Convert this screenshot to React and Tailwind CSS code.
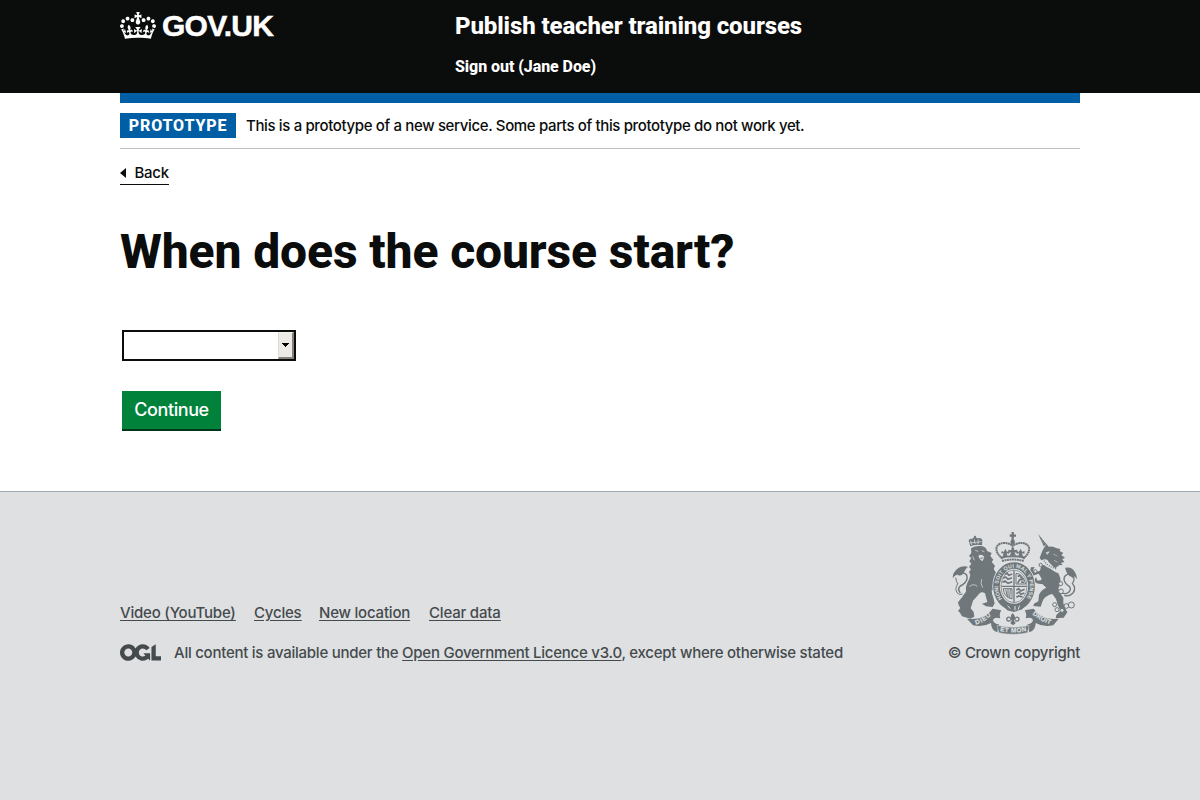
import React from "react";

function Crown() {
  return (
    <svg viewBox="0 0 132 97" className="mt-[12px] h-[27px] w-9 shrink-0" preserveAspectRatio="none" fill="currentColor" aria-hidden="true">
      <path fillRule="evenodd" d="M25 30.2c3.5 1.5 7.7-.2 9.1-3.7 1.5-3.6-.2-7.8-3.9-9.2-3.6-1.4-7.6.3-9.1 3.9-1.4 3.5.3 7.5 3.9 9zM9 39.5c3.6 1.5 7.8-.2 9.2-3.7 1.5-3.6-.2-7.8-3.9-9.1-3.6-1.5-7.6.2-9.1 3.8-1.4 3.5.3 7.5 3.8 9zM4.4 57.2c3.5 1.5 7.7-.2 9.1-3.8 1.5-3.6-.2-7.7-3.9-9.1-3.5-1.5-7.6.3-9.1 3.8-1.4 3.5.3 7.6 3.9 9.1zm38.3-21.4c3.5 1.5 7.7-.2 9.1-3.8 1.5-3.6-.2-7.7-3.9-9.1-3.6-1.5-7.6.3-9.1 3.8-1.3 3.6.4 7.7 3.9 9.1zm64.4-5.6c-3.6 1.5-7.8-.2-9.1-3.7-1.5-3.6.2-7.8 3.8-9.2 3.6-1.4 7.7.3 9.2 3.9 1.3 3.5-.4 7.5-3.9 9zm15.9 9.3c-3.6 1.5-7.7-.2-9.1-3.7-1.5-3.6.2-7.8 3.7-9.1 3.6-1.5 7.7.2 9.2 3.8 1.5 3.5-.3 7.5-3.8 9zm4.7 17.7c-3.6 1.5-7.8-.2-9.2-3.8-1.5-3.6.2-7.7 3.9-9.1 3.6-1.5 7.7.3 9.2 3.8 1.3 3.5-.4 7.6-3.9 9.1zM89.3 35.8c-3.6 1.5-7.8-.2-9.2-3.8-1.4-3.6.2-7.7 3.9-9.1 3.6-1.5 7.7.3 9.2 3.8 1.4 3.6-.3 7.7-3.9 9.1zM69.7 17.7l8.9 4.7V9.3l-8.9 2.8c-.2-.3-.5-.6-.9-.9L72.4 0H59.6l3.5 11.2c-.3.3-.6.5-.9.9l-8.8-2.8v13.1l8.8-4.7c.3.3.6.7.9.9l-5 15.4v.1c-.2.8-.4 1.6-.4 2.4 0 4.1 3.1 7.5 7 8.1h.2c.3 0 .7.1 1 .1.4 0 .7 0 1-.1h.2c4-.6 7.1-4.1 7.1-8.1 0-.8-.1-1.7-.4-2.4V34l-5.1-15.4c.4-.2.7-.6 1-.9zM66 92.8c16.9 0 32.8 1.1 47.1 3.2 4-16.9 8.9-26.7 14-33.5l-9.6-3.4c1 4.9 1.1 7.2 0 10.2-1.5-1.4-3-4.3-4.2-8.7L108.6 76c2.8-2 5-3.2 7.5-3.3-4.4 9.4-10 11.9-13.6 11.2-4.3-.8-6.3-4.6-5.6-7.9 1-4.7 5.7-5.9 8-.5 4.3-8.7-3-11.4-7.6-8.8 7.1-7.2 7.9-13.5 2.1-21.1-8 6.1-8.1 12.3-4.5 20.8-4.7-5.4-12.1-2.5-9.5 6.2 3.4-5.2 7.9-2 7.2 3.1-.6 4.3-6.4 7.8-13.5 7.2-10.3-.9-10.9-8-11.2-13.8 2.5-.5 7.1 1.8 11 7.3L80.2 60c-4.1 4.4-8 5.3-12.3 5.4 1.4-4.4 8-11.6 8-11.6H55.5s6.4 7.2 7.9 11.6c-4.2-.1-8-1-12.3-5.4l1.4 16.4c3.9-5.5 8.5-7.7 10.9-7.3-.3 5.8-.9 12.8-11.1 13.8-7.2.6-12.9-2.9-13.5-7.2-.7-5 3.8-8.3 7.1-3.1 2.7-8.7-4.6-11.6-9.4-6.2 3.7-8.5 3.6-14.7-4.6-20.8-5.8 7.6-5 13.9 2.2 21.1-4.7-2.6-11.9.1-7.7 8.8 2.3-5.5 7.1-4.2 8.1.5.7 3.3-1.3 7.1-5.7 7.9-3.5.7-9-1.8-13.5-11.2 2.5.1 4.7 1.3 7.5 3.3l-4.7-15.4c-1.2 4.4-2.7 7.2-4.3 8.7-1.1-3-.9-5.3 0-10.2l-9.5 3.4c5 6.9 9.9 16.7 14 33.5 14.8-2.1 30.8-3.2 47.7-3.2z" />
    </svg>
  );
}

function OglLogo() {
  return (
    <svg viewBox="0 0 483.2 195.7" className="h-[17px] w-[41px] shrink-0 -translate-y-px" fill="currentColor" aria-hidden="true">
      <path d="M421.5 142.8V.1l-50.7 32.3v161.1h112.4v-50.7zm-122.3-9.6A47.12 47.12 0 0 1 221 97.8c0-26 21.1-47.1 47.1-47.1 16.7 0 31.4 8.7 39.7 21.8l42.7-27.2A97.63 97.63 0 0 0 268.1 0c-36.5 0-68.3 20.1-85.1 49.7A98 98 0 0 0 97.8 0C43.9 0 0 43.9 0 97.8s43.9 97.8 97.8 97.8c36.5 0 68.3-20.1 85.1-49.7a97.76 97.76 0 0 0 149.6 25.4l19.4 22.2h3v-87.8h-80l24.3 27.5zM97.8 145c-26 0-47.1-21.1-47.1-47.1s21.1-47.1 47.1-47.1 47.1 21.1 47.1 47.1S123.8 145 97.8 145" />
    </svg>
  );
}

function CoatOfArms() {
  const ink = "#6f777b";
  const paper = "#dee0e2";
  return (
    <svg viewBox="30 15 390 315" className="h-[105px] w-[130px]" preserveAspectRatio="none" aria-hidden="true">
      {/* lion */}
      <g fill={ink}>
        <path d="M91 64 L86 48 Q87 39 96 42 Q103 33 112 40 Q123 36 127 45 L126 61 Q108 56 91 64Z" />
        <circle cx="105" cy="36" r="3.5" />
        <path d="M93 70 Q108 60 128 64 Q139 67 141 78 L155 84 L151 93 L160 104 L155 111 L165 122 L161 132 L169 145 L162 158 L170 172 L158 181 L164 197 L155 195 Q155 207 160 218 L164 235 L158 246 L138 244 L126 236 L142 231 L135 205 Q126 199 119 205 L99 227 L92 250 L101 261 L103 275 L91 281 L66 274 L59 262 L54 258 L61 249 L56 240 L54 232 L65 218 Q72 207 78 200 Q76 184 82 174 Q89 162 91 150 L87 141 L93 133 L87 126 L94 116 L88 109 L94 99 L87 93 L94 84 Z" />
        <path d="M38 160 Q37 142 55 129 Q65 122 84 125 Q75 132 72 142 Q64 157 53 149 Q46 148 38 160Z" />
      </g>
      <path d="M66 143 Q84 145 81 162 Q77 175 61 183 Q51 192 61 204" fill="none" stroke={ink} strokeWidth="4.5" />
      <path d="M47 158 Q49 172 54 177 M53 177 Q43 191 52 204 Q58 212 68 207" fill="none" stroke={ink} strokeWidth="3" />
      <g stroke={paper} fill="none" strokeWidth="2.2">
        <path d="M92 47 L95 60 M103 43 L105 57 M115 43 L114 57 M88 54 L125 50" />
        <path d="M106 76 L115 79 M125 77 L133 80 M98 94 L103 106 M88 185 Q100 174 112 184 M128 188 Q120 175 125 163" />
      </g>
      <path d="M115 92 Q125 85 133 96 L128 108 Q119 105 115 92Z" fill={paper} />
      <path d="M119 99 L131 97 L126 102Z" fill={ink} />

      {/* unicorn */}
      <path d="M294 26 L319 57 L311 64 Z" fill={ink} />
      <path d="M301 49 L308 45 M306 56 L313 51" stroke={paper} strokeWidth="1" />
      <g fill={ink}>
        <path d="M313 67 L319 56 L326 65 Q338 62 350 70 L361 72 L359 78 L370 84 L364 90 L375 98 L367 103 L373 111 L363 114 L368 121 L357 120 L349 134 L326 111 Q323 101 313 103 L304 106 L299 98 L307 78Z" />
        <path d="M304 121 L323 119 Q331 135 355 145 L360 157 Q365 175 355 190 L361 205 L370 219 L370 235 L374 247 L382 262 L371 278 L347 280 L349 270 L362 257 L354 242 L348 222 L337 207 Q318 211 309 225 L302 245 L280 243 L282 236 L295 229 L297 209 Q304 194 319 188 L307 177 Q286 178 280 166 L289 157 L291 166 Q304 169 305 161 L296 146 L278 152 L270 138 L273 127 L284 126 L279 136 L284 142 L300 137Z" />
        <path d="M375 128 Q397 124 405 142 Q411 150 411 163 L404 154 Q400 164 394 155 Q382 154 375 128Z" />
      </g>
      <path d="M392 146 Q371 148 372 164 Q375 177 388 184 Q395 192 386 202 Q377 209 365 204 M402 157 Q403 168 397 175 Q410 190 399 204 Q388 216 373 211" fill="none" stroke={ink} strokeWidth="4" />
      <path d="M309 109 Q317 127 349 133 L355 126" fill="none" stroke={paper} strokeWidth="7" />
      <path d="M312 107 Q322 125 352 132" fill="none" stroke={ink} strokeWidth="4" strokeDasharray="3 4" />
      <g fill={paper} stroke={ink} strokeWidth="3">
        <circle cx="302" cy="120" r="5" /><circle cx="286" cy="139" r="5" />
        <circle cx="362" cy="176" r="6" /><circle cx="363" cy="199" r="7" />
        <circle cx="344" cy="239" r="6" /><circle cx="351" cy="254" r="6" />
        <circle cx="366" cy="256" r="6" /><circle cx="379" cy="243" r="7" />
        <circle cx="394" cy="240" r="9" />
      </g>
      <path d="M318 83 L328 80 L322 88Z M340 87 L352 93 M342 106 L353 112" fill={paper} stroke={paper} strokeWidth="1.5" />

      {/* imperial crown */}
      <g fill="none" stroke={ink}>
        <path d="M218 21 V49 M209 32 H228" strokeWidth="7" />
        <path d="M188 101 C163 82 162 57 190 54 Q208 54 216 61 M249 101 C274 82 274 57 247 54 Q230 54 220 61 M218 45 V83" strokeWidth="6" strokeDasharray="6 1.2" />
        <path d="M182 98 Q218 89 255 98" strokeWidth="6" />
        <path d="M186 108 Q218 99 251 108" strokeWidth="6" strokeDasharray="6 1.5" />
      </g>
      <g fill={ink}>
        <circle cx="218" cy="51" r="7" />
        <path d="M188 95 L191 84 L184 86 L185 79 L192 80 L196 71 L201 80 L208 79 L207 87 L200 84 L202 93Z M209 92 L214 82 L205 84 V74 L213 76 L218 66 L224 76 L232 74 V84 L223 82 L228 92Z M236 93 L237 84 L230 87 L230 79 L237 80 L242 71 L246 80 L254 79 L253 87 L246 84 L249 95Z" />
      </g>

      {/* garter and quartered shield */}
      <ellipse cx="222" cy="184" rx="65" ry="75" fill={paper} />
      <ellipse cx="222" cy="184" rx="52.5" ry="62.5" fill="none" stroke={ink} strokeWidth="20" />
      <ellipse cx="222" cy="184" rx="39" ry="49" fill={paper} stroke={ink} strokeWidth="2" />
      <path d="M184 184 H260 M222 136 V232" stroke={ink} strokeWidth="4" />
      <g fill="none" stroke={ink} strokeWidth="5">
        <path d="M195 149 L201 144 L206 151 L217 147 M189 160 L197 156 L204 163 L216 158 M187 172 L195 168 L204 175 L217 170" />
        <path d="M228 145 Q249 146 257 177 H228 Z" strokeWidth="3" />
        <path d="M233 155 L239 151 L248 164 L239 164 L233 175 M243 171 L252 172" />
        <path d="M190 191 H216 V222 Q191 216 190 191 M197 193 L202 215 M204 192 V218 M211 192 L209 219" strokeWidth="3" />
        <path d="M229 195 L236 191 L242 198 L254 193 M229 206 L237 201 L243 208 L253 204 M229 217 L236 213 L248 216" />
      </g>
      <defs>
        <path id="garter" d="M186 222 A47.5 57 0 1 1 258 222" />
        <path id="ribbonLeft" d="M108 299 Q137 290 158 266" />
        <path id="ribbonBase" d="M180 318 Q219 327 259 318" />
        <path id="ribbonRight" d="M277 268 Q302 290 336 299" />
      </defs>
      <text fill={paper} fontFamily="Liberation Sans" fontSize="16" fontWeight="700">
        <textPath href="#garter" textLength="240">HONI SOIT QUI MAL Y PENSE</textPath>
      </text>
      <path d="M190 236 L221 249 L256 236 L247 253 L222 261 L201 256Z" fill={ink} />
      <path d="M203 242 L211 251 M225 243 V256 M239 242 L234 254" stroke={paper} strokeWidth="3" />

      {/* motto ribbon */}
      <path d="M81 281 Q134 287 158 251 L184 256 Q176 268 181 280 Q161 274 159 286 Q162 297 177 298 L172 322 Q153 316 153 294 Q131 307 99 301Z" fill={ink} />
      <path d="M356 281 Q304 287 281 251 L254 256 Q262 268 257 280 Q277 274 279 286 Q276 297 262 298 L268 322 Q287 316 287 294 Q309 307 340 301Z" fill={ink} />
      <path d="M172 301 Q219 313 267 301 L263 323 Q219 333 176 323Z" fill={ink} stroke={paper} strokeWidth="1.5" />
      <g fill={paper} stroke={paper} strokeWidth="0.5" fontFamily="Liberation Sans" fontSize="19" fontWeight="700">
        <text><textPath href="#ribbonLeft" textLength="54">DIEU</textPath></text>
        <text><textPath href="#ribbonBase" textLength="80">ET MON</textPath></text>
        <text><textPath href="#ribbonRight" textLength="62">DROIT</textPath></text>
      </g>
      <g fill={ink}>
        <path d="M218 264 Q230 276 222 287 L227 295 L219 301 L211 295 L215 287 Q207 276 218 264Z" />
        <path d="M212 287 Q198 291 201 279 Q209 272 213 284 M225 287 Q239 291 236 279 Q228 272 224 284" fill="none" stroke={ink} strokeWidth="4" />
      </g>
    </svg>
  );
}

function Header() {
  return (
    <header className="h-[93px] bg-[#0b0c0c] text-white">
      <div className="mx-auto flex w-[960px]">
        <a href="#" className="flex w-[335px] gap-[6px]">
          <Crown />
          <span className="pt-[11px] font-['Liberation_Sans',sans-serif] text-[30px] leading-[30px] font-bold tracking-[-0.75px] [-webkit-text-stroke:0.5px_white]">GOV.UK</span>
        </a>
        <div className="flex flex-col items-start pt-[11px] font-['Roboto','Liberation_Sans',sans-serif] font-extrabold">
          <a href="#" className="text-2xl leading-[30px] tracking-[-0.11px]">Publish teacher training courses</a>
          <a href="#" className="mt-[16px] text-base leading-5 tracking-[-0.07px]">Sign out (Jane Doe)</a>
        </div>
      </div>
    </header>
  );
}

function StartDateForm() {
  return (
    <main className="pt-[42px]">
      <h1 className="font-['Roboto','Liberation_Sans',sans-serif] text-5xl leading-[50px] font-extrabold tracking-[-0.12px]">When does the course start?</h1>
      <button type="button" role="combobox" aria-expanded="false" aria-controls="start-dates" aria-label="Course start date" className="mt-[53px] ml-[2px] flex h-[31px] w-[174px] justify-end border-2 border-[#0b0c0c] bg-white">
        <span className="flex h-[27px] w-4 items-center justify-center border-t border-r-2 border-b-2 border-l border-t-[#f4f2ef] border-r-[#85817c] border-b-[#85817c] border-l-[#dedbd7] bg-[#edeae6]">
          <svg viewBox="0 0 7 4" className="h-1 w-[7px]" shapeRendering="crispEdges" aria-hidden="true">
            <path d="M0 0h7v1H6v1H5v1H4v1H3V3H2V2H1V1H0z" />
          </svg>
        </span>
      </button>
      <button type="button" className="mt-[30px] ml-[2px] block h-10 w-[99px] border-b-2 border-[#003618] bg-[#00823b] pb-px text-[18px] leading-[37px] font-medium tracking-[-0.4px] text-white">Continue</button>
    </main>
  );
}

export default function App() {
  return (
    <div className="flex min-h-screen flex-col bg-white font-['Inter','Liberation_Sans',sans-serif] text-[15px] font-[450] text-[#0b0c0c]">
      <Header />
      <div className="mx-auto h-[398px] w-[960px]">
        <div className="h-[10px] bg-[#005ea5]" />
        <div className="flex h-[46px] items-start border-b border-[#bfc1c3] pt-[10px]">
          <strong className="h-[25px] w-[116px] bg-[#005ea5] text-center font-['Roboto','Liberation_Sans',sans-serif] text-base leading-[25px] font-extrabold tracking-[0.85px] text-white">PROTOTYPE</strong>
          <span className="ml-[10px] leading-[25px] tracking-[-0.36px] whitespace-nowrap">This is a prototype of a new service. Some parts of this prototype do not work yet.</span>
        </div>
        <a href="#" className="mt-[14px] flex h-[22px] w-[49px] items-center justify-between border-b border-[#0b0c0c] pb-[2px]">
          <svg viewBox="0 0 6 10" className="h-[10px] w-[6px]" aria-hidden="true"><path d="M0 5L6 0v10z" fill="currentColor" /></svg>
          <span className="leading-5 tracking-[-0.2px]">Back</span>
        </a>
        <StartDateForm />
      </div>
      <footer className="flex-1 border-t border-[#a1acb2] bg-[#dee0e2] text-[#454a4d]">
        <div className="mx-auto flex w-[960px] items-end justify-between pt-[38px]">
          <div>
            <nav className="flex h-5 leading-5 tracking-[-0.2px] whitespace-nowrap underline underline-offset-2">
              <a href="#" className="mr-[18px] w-[116px]">Video (YouTube)</a>
              <a href="#" className="mr-[19px] w-[46px]">Cycles</a>
              <a href="#" className="mr-[19px] w-[91px]">New location</a>
              <a href="#">Clear data</a>
            </nav>
            <div className="mt-5 flex h-5 items-center whitespace-nowrap">
              <OglLogo />
              <p className="ml-[13px] leading-5 tracking-[-0.25px]">All content is available under the <a href="#" className="underline underline-offset-2">Open Government Licence v3.0</a>, except where otherwise stated</p>
            </div>
          </div>
          <div className="flex flex-col items-end">
            <CoatOfArms />
            <a href="#" className="mt-[8px] h-5 leading-5 tracking-[-0.28px] whitespace-nowrap">© Crown copyright</a>
          </div>
        </div>
      </footer>
    </div>
  );
}
